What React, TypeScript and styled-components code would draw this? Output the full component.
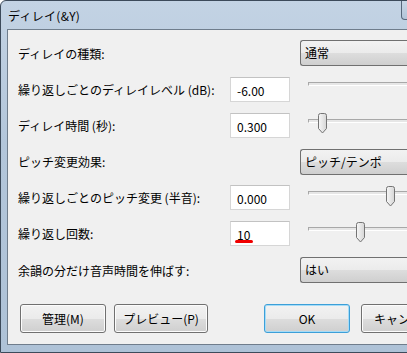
import styled, { createGlobalStyle } from 'styled-components';

const GlobalStyle = createGlobalStyle`
  html, body {
    margin: 0;
    padding: 0;
    overflow: hidden;
    background: #ffffff;
  }
  body {
    font-family: "Noto Sans CJK JP", "Liberation Sans", sans-serif;
    font-size: 12px;
  }
`;

// Fenêtre façon Windows 7
const Window = styled.div`
  width: 451px;
  height: 353px;
  box-sizing: border-box;
  border: 1px solid #3c4a5a;
  border-radius: 6px 6px 0 0;
  background: linear-gradient(180deg, #c3d3e4 0%, #b3c6da 40%, #aec2d7 100%);
  display: flex;
  flex-direction: column;
  padding: 0 6px 7px 6px;
`;

const TitleBar = styled.div`
  height: 28px;
  display: flex;
  align-items: flex-start;
`;

const Title = styled.span`
  margin-top: 6px;
  margin-left: 1px;
  font-size: 12px;
  color: #000;
  letter-spacing: 0.3px;
`;

const CloseButton = styled.div`
  margin-left: auto;
  width: 43px;
  height: 19px;
  box-sizing: border-box;
  border: 1px solid #56677a;
  border-top: none;
  border-radius: 0 0 4px 4px;
  background: linear-gradient(180deg, #c9d7e6, #b2c4d8);
`;

const Client = styled.div`
  flex: 1;
  background: #f0f0f0;
  border: 1px solid #6f7d8c;
  padding: 10px 0 0 10px;
  display: flex;
  flex-direction: column;
`;

const Form = styled.div`
  display: grid;
  grid-template-columns: 212px 60px 10px 1fr;
  grid-auto-rows: 26px;
  row-gap: 10.2px;
  align-items: center;
`;

const Label = styled.div`
  grid-column: 1;
  color: #000;
  white-space: nowrap;
`;

const TextBox = styled.div`
  grid-column: 2;
  height: 25px;
  box-sizing: border-box;
  width: 60px;
  background: #fff;
  border: 1px solid #d6d6d6;
  border-top-color: #c2c2c2;
  padding: 4px 0 0 6px;
  color: #000;
  position: relative;
`;

const Squiggle = styled.span`
  position: absolute;
  left: 4px;
  bottom: 2px;
  width: 18px;
  height: 3px;
  border-radius: 2px;
  background: #f00000;
`;

const Combo = styled.div`
  grid-column: 4;
  height: 26px;
  box-sizing: border-box;
  border: 1px solid #707070;
  border-right: none;
  border-radius: 3px 0 0 3px;
  background: linear-gradient(180deg, #f2f2f2 0%, #ebebeb 50%, #dddddd 51%, #cfcfcf 100%);
  padding: 3px 0 0 4px;
  color: #000;
`;

const SliderCell = styled.div`
  grid-column: 4;
  height: 26px;
  position: relative;
  padding-left: 8px;
  display: flex;
  align-items: center;
`;

const Track = styled.div<{ $offset: number }>`
  flex: 1;
  height: 2px;
  margin-top: ${p => p.$offset}px;
  border-top: 1px solid #a8a8a8;
  border-left: 1px solid #a8a8a8;
  border-bottom: 1px solid #ffffff;
  background: #e6e6e6;
`;

const Thumb = styled.svg<{ $x: number }>`
  position: absolute;
  left: ${p => p.$x}px;
  top: 1px;
`;

const ButtonRow = styled.div`
  display: flex;
  gap: 8px;
  margin-top: 21px;
  padding-left: 2px;
`;

const Button = styled.div<{ $w: number; $default?: boolean; $push?: number }>`
  width: ${p => p.$w}px;
  height: 29px;
  box-sizing: border-box;
  margin-left: ${p => p.$push ?? 0}px;
  border: 1px solid ${p => (p.$default ? '#3c9fd8' : '#707070')};
  box-shadow: ${p => (p.$default ? 'inset 0 0 0 1px #a6dcf7' : 'inset 0 0 0 1px #fcfcfc')};
  border-radius: 3px;
  background: linear-gradient(180deg, #f2f2f2 0%, #ebebeb 50%, #dddddd 51%, #cfcfcf 100%);
  display: flex;
  align-items: center;
  justify-content: center;
  color: #000;
  flex-shrink: 0;
`;

function SliderThumb({ x }: { x: number }) {
  return (
    <Thumb $x={x} width="11" height="21" viewBox="0 0 11 21">
      <defs>
        <linearGradient id="tg" x1="0" y1="0" x2="1" y2="0">
          <stop offset="0" stopColor="#f7f7f7" />
          <stop offset="1" stopColor="#d6d6d6" />
        </linearGradient>
      </defs>
      <path
        d="M1.5 2.5 Q1.5 0.5 3.5 0.5 L7.5 0.5 Q9.5 0.5 9.5 2.5 L9.5 15.5 L5.5 20 L1.5 15.5 Z"
        fill="url(#tg)"
        stroke="#747474"
        strokeWidth="1"
      />
    </Thumb>
  );
}

function Slider({ thumb, offset = -9 }: { thumb?: number; offset?: number }) {
  return (
    <SliderCell>
      <Track $offset={offset} />
      {thumb !== undefined && <SliderThumb x={thumb} />}
    </SliderCell>
  );
}

export default function App() {
  return (
    <>
      <GlobalStyle />
      <Window>
        <TitleBar>
          <Title>ディレイ(&amp;Y)</Title>
          <CloseButton />
        </TitleBar>
        <Client>
          <Form>
            <Label>ディレイの種類:</Label>
            <Combo>通常</Combo>

            <Label>繰り返しごとのディレイレベル (dB):</Label>
            <TextBox>-6.00</TextBox>
            <Slider offset={-10} />

            <Label>ディレイ時間 (秒):</Label>
            <TextBox>0.300</TextBox>
            <Slider thumb={17} />

            <Label>ピッチ変更効果:</Label>
            <Combo>ピッチ/テンポ</Combo>

            <Label>繰り返しごとのピッチ変更 (半音):</Label>
            <TextBox>0.000</TextBox>
            <Slider thumb={85} />

            <Label>繰り返し回数:</Label>
            <TextBox>
              10
              <Squiggle />
            </TextBox>
            <Slider thumb={55} />

            <Label>余韻の分だけ音声時間を伸ばす:</Label>
            <Combo>はい</Combo>
          </Form>
          <ButtonRow>
            <Button $w={86}>管理(M)</Button>
            <Button $w={94}>プレビュー(P)</Button>
            <Button $w={86} $default $push={48}>OK</Button>
            <Button $w={86} $push={3}>キャンセル</Button>
          </ButtonRow>
        </Client>
      </Window>
    </>
  );
}
